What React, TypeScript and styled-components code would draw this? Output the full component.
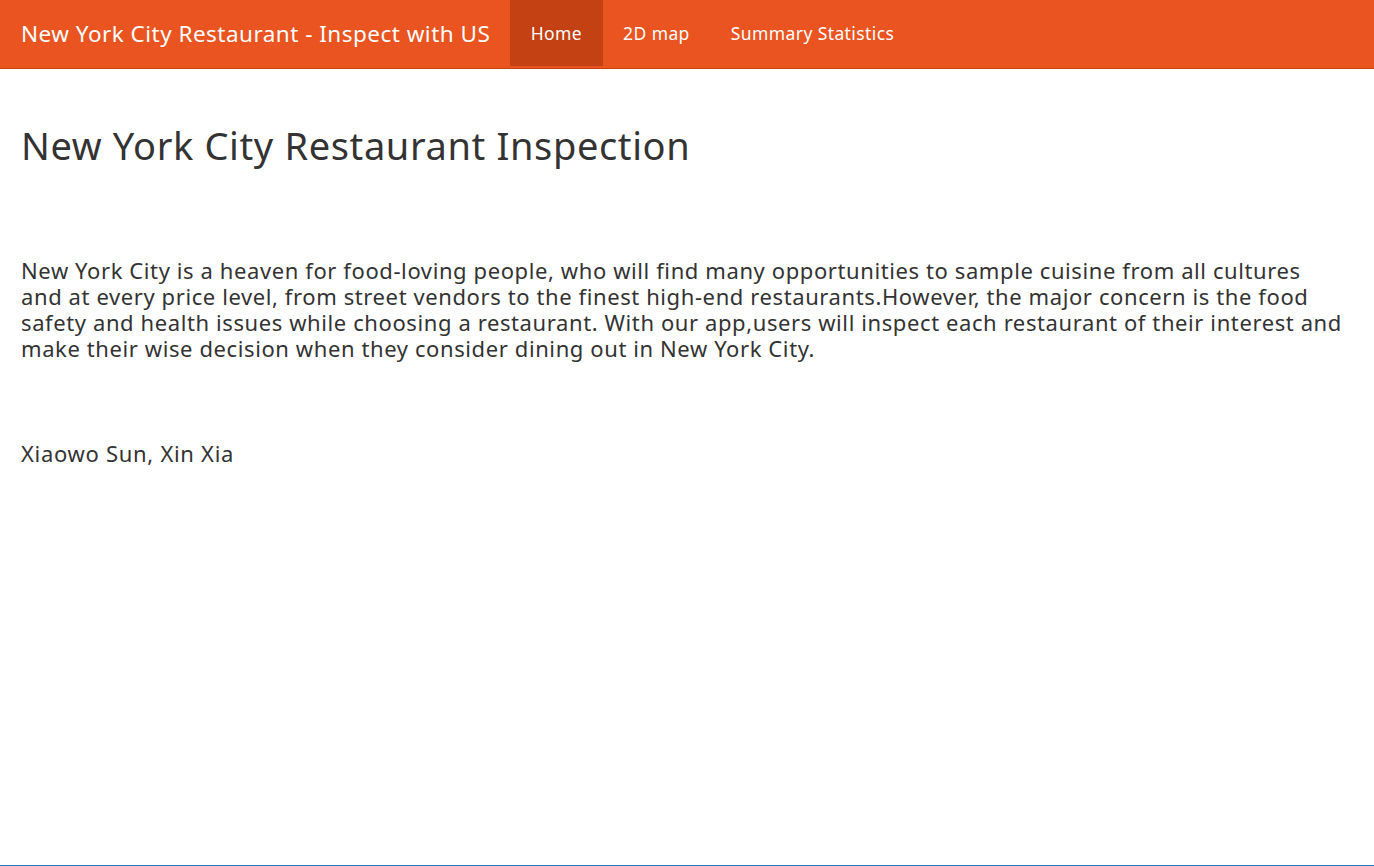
import React from "react";
import styled, { createGlobalStyle } from "styled-components";

const Global = createGlobalStyle`
  html, body { margin: 0; padding: 0; background: #fff; }
  body {
    font-family: "Noto Sans", "Liberation Sans", sans-serif;
    font-variant-ligatures: none;
    color: #333;
    min-height: 866px;
    border-bottom: 1px solid #1c75bc;
    box-sizing: border-box;
  }
`;

const NavBar = styled.nav`
  display: flex;
  align-items: flex-start;
  height: 68px;
  background: #e95420;
  border-bottom: 1px solid #c34113;
  padding-left: 21px;
`;

const Brand = styled.div`
  display: flex;
  align-items: center;
  height: 66px;
  font-size: 22.5px;
  letter-spacing: 0.48px;
  color: #fff;
  margin-right: 20px;
  white-space: nowrap;
`;

const NavList = styled.ul`
  display: flex;
  list-style: none;
  margin: 0;
  padding: 0;
`;

const NavItem = styled.li<{ $active?: boolean }>`
  display: flex;
  align-items: center;
  height: 66px;
  padding: 0 20.5px;
  font-size: 17.5px;
  letter-spacing: 0.4px;
  color: #fff;
  background: ${(p) => (p.$active ? "#c34113" : "transparent")};
`;

const Main = styled.main`
  padding: 0 26px 0 21px;
`;

const Title = styled.h1`
  margin: 54px 0 0;
  font-size: 38px;
  letter-spacing: 0.63px;
  font-weight: 400;
  line-height: 44px;
`;

const Para = styled.p`
  margin: 90px 0 0;
  font-size: 22px;
  letter-spacing: 0.6px;
  line-height: 26px;
`;

const Authors = styled.p`
  margin: 79px 0 0;
  font-size: 22px;
  letter-spacing: 0.7px;
  line-height: 26px;
`;

export default function App() {
  return (
    <>
      <Global />
      <NavBar>
        <Brand>New York City Restaurant - Inspect with US</Brand>
        <NavList>
          <NavItem $active>Home</NavItem>
          <NavItem>2D map</NavItem>
          <NavItem>Summary Statistics</NavItem>
        </NavList>
      </NavBar>
      <Main>
        <Title>New York City Restaurant Inspection</Title>
        <Para>
          New York City is a heaven for food-loving people, who will find many opportunities to sample cuisine from all cultures and at every price level, from street vendors to the finest high-end restaurants.However, the major concern is the food safety and health issues while choosing a restaurant. With our app,users will inspect each restaurant of their interest and make their wise decision when they consider dining out in New York City.
        </Para>
        <Authors>Xiaowo Sun, Xin Xia</Authors>
      </Main>
    </>
  );
}
